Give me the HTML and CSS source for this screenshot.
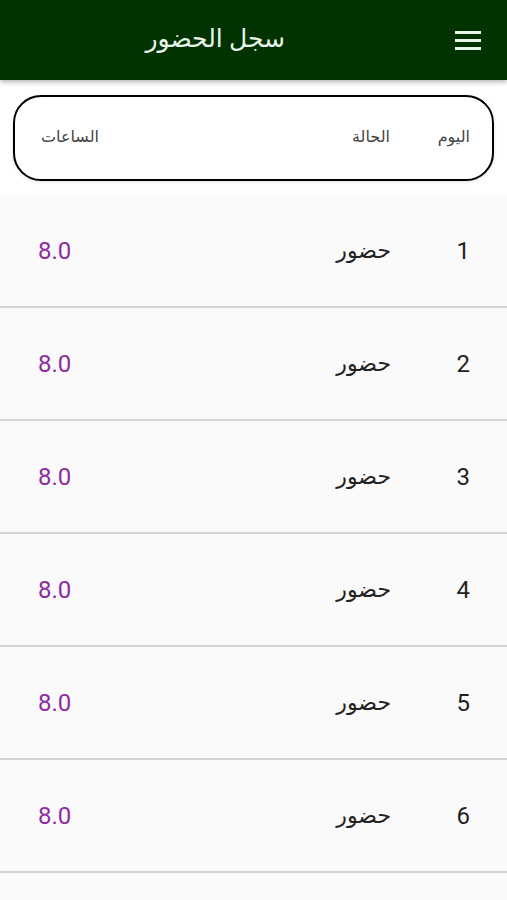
FILE: index.html
```html
<!DOCTYPE html>
<html lang="ar" dir="rtl">
  <head>
    <meta charset="UTF-8" />
    <title>سجل الحضور</title>
    <link rel="stylesheet" href="styles.css">
  </head>
  <body>
    <!-- App bar -->
    <header class="appbar">
      <button class="menu" aria-label="menu">
        <svg width="26" height="20" viewBox="0 0 26 20">
          <rect x="0" y="1" width="26" height="3" fill="#e8f5e9" />
          <rect x="0" y="9" width="26" height="3" fill="#e8f5e9" />
          <rect x="0" y="17" width="26" height="3" fill="#e8f5e9" />
        </svg>
      </button>
      <h1 class="title">سجل الحضور</h1>
    </header>

    <!-- Table header -->
    <div class="head-wrap">
      <div class="head-card">
        <span class="col-day">اليوم</span>
        <span class="col-status">الحالة</span>
        <span class="col-hours">الساعات</span>
      </div>
    </div>

    <!-- Rows -->
    <ul class="rows">
      <li class="row"><span class="col-day">1</span><span class="col-status">حضور</span><span class="col-hours">8.0</span></li>
      <li class="row"><span class="col-day">2</span><span class="col-status">حضور</span><span class="col-hours">8.0</span></li>
      <li class="row"><span class="col-day">3</span><span class="col-status">حضور</span><span class="col-hours">8.0</span></li>
      <li class="row"><span class="col-day">4</span><span class="col-status">حضور</span><span class="col-hours">8.0</span></li>
      <li class="row"><span class="col-day">5</span><span class="col-status">حضور</span><span class="col-hours">8.0</span></li>
      <li class="row"><span class="col-day">6</span><span class="col-status">حضور</span><span class="col-hours">8.0</span></li>
    </ul>
  </body>
</html>
```

FILE: styles.css
```css
body {
  margin: 0;
  font-family: Roboto, "Noto Sans", "DejaVu Sans", sans-serif;
  background-color: #fafafa;
  overflow: hidden;
}
.appbar {
  height: 80px;
  background-color: #013300;
  display: flex;
  align-items: center;
  box-shadow: 0 2px 5px rgba(0, 0, 0, 0.3);
  position: relative;
  z-index: 1;
}
.menu {
  background: none;
  border: none;
  padding: 0;
  margin-right: 26px;
  width: 26px;
  height: 20px;
  display: flex;
}
.title {
  margin: 0;
  margin-right: 170px;
  font-size: 25px;
  font-weight: normal;
  color: #e8f5e9;
  position: relative;
  top: -2px;
}
.head-wrap {
  background-color: #fff;
  padding: 15px 12px 14px 12px;
}
.head-card {
  height: 86px;
  border: 2.5px solid #000;
  border-radius: 28px;
  display: flex;
  align-items: center;
  padding-bottom: 4px;
  box-sizing: border-box;
  box-shadow: 0 1px 3px rgba(0, 0, 0, 0.15);
  margin: 0 1px;
  font-size: 16px;
  color: #444;
}
.head-card .col-day {
  margin-right: 22px;
  width: 58px;
}
.head-card .col-status {
  margin-right: 22px;
}
.head-card .col-hours {
  margin-right: auto;
  margin-left: 26px;
}
.rows {
  list-style: none;
  margin: 0;
  padding: 0;
}
.row {
  height: 111px;
  border-bottom: 2px solid #d3d3d3;
  display: flex;
  align-items: center;
  font-size: 22px;
  color: #222;
}
.row .col-day {
  margin-right: 37px;
  width: 79px;
  font-size: 24px;
}
.row .col-hours {
  margin-right: auto;
  margin-left: 38px;
  font-size: 24px;
  color: #8e2ba0;
}
```
